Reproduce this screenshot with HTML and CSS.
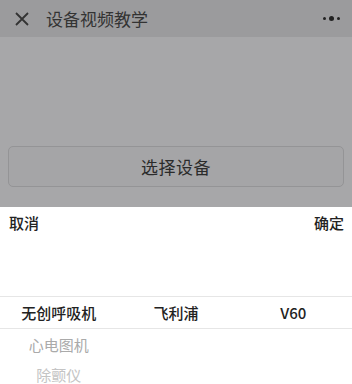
FILE: index.html
```html
<!DOCTYPE html>
<html lang="zh">

<head>
    <meta charset="UTF-8">
    <meta name="viewport" content="width=device-width, initial-scale=1.0">
    <title>设备视频教学</title>
    <link rel="stylesheet" href="styles.css">
</head>

<body>
    <div class="page">
        <header class="nav-bar">
            <span class="nav-close">
                <svg width="16" height="16" viewBox="0 0 16 16">
                    <path d="M2 2 L14 14 M14 2 L2 14" stroke="#333" stroke-width="1.8" fill="none" />
                </svg>
            </span>
            <span class="nav-title">设备视频教学</span>
            <span class="nav-more">
                <i class="dot"></i><i class="dot big"></i><i class="dot"></i>
            </span>
        </header>

        <div class="content">
            <button class="select-btn">选择设备</button>
        </div>

        <!-- picker sheet -->
        <div class="picker">
            <div class="picker-actions">
                <span>取消</span>
                <span>确定</span>
            </div>
            <div class="picker-body">
                <div class="picker-row selected">
                    <span>无创呼吸机</span>
                    <span>飞利浦</span>
                    <span>V60</span>
                </div>
                <div class="picker-row faded">
                    <span>心电图机</span>
                    <span></span>
                    <span></span>
                </div>
                <div class="picker-row faded more">
                    <span>除颤仪</span>
                    <span></span>
                    <span></span>
                </div>
            </div>
        </div>
    </div>
</body>

</html>
```

FILE: styles.css
```css
body {
    margin: 0;
    font-family: "Noto Sans CJK SC", "Liberation Sans", sans-serif;
    background-color: #fff;
    color: #222;
}

.page {
    width: 352px;
    height: 384px;
    overflow: hidden;
}

.nav-bar {
    height: 37px;
    display: flex;
    align-items: center;
    background-color: #9b9b9d;
    padding: 0 12px 0 14px;
    box-sizing: border-box;
}

.nav-close {
    display: flex;
    width: 16px;
    height: 16px;
    margin-right: 16px;
}

.nav-title {
    flex: 1;
    font-size: 17px;
    color: #333;
}

.nav-more {
    display: flex;
    align-items: center;
    gap: 3px;
}

.dot {
    width: 3px;
    height: 3px;
    border-radius: 50%;
    background-color: #222;
}

.dot.big {
    width: 5px;
    height: 5px;
}

.content {
    height: 170px;
    background-color: #a7a7a9;
    padding: 109px 8px 0;
    box-sizing: border-box;
}

.select-btn {
    width: 100%;
    height: 41px;
    background-color: #a5a5a7;
    border: 1px solid #949496;
    border-radius: 5px;
    font-family: inherit;
    font-size: 17px;
    color: #2b2b2b;
    letter-spacing: 0.5px;
}

.picker-actions {
    display: flex;
    justify-content: space-between;
    padding: 5px 8px 0 9px;
    font-size: 15px;
    font-weight: 500;
    color: #222;
    height: 33px;
}

.picker-body {
    padding-top: 51px;
}

.picker-row {
    display: grid;
    grid-template-columns: 1fr 1fr 1fr;
    height: 31px;
    align-items: center;
    text-align: center;
    font-size: 15px;
}

.picker-row.selected {
    border-top: 1px solid #e6e6e6;
    border-bottom: 1px solid #e6e6e6;
    font-weight: 500;
    color: #222;
}

.picker-row.faded {
    color: #aaa;
    height: 30px;
}

.picker-row.more {
    color: #c4c4c4;
}
```
